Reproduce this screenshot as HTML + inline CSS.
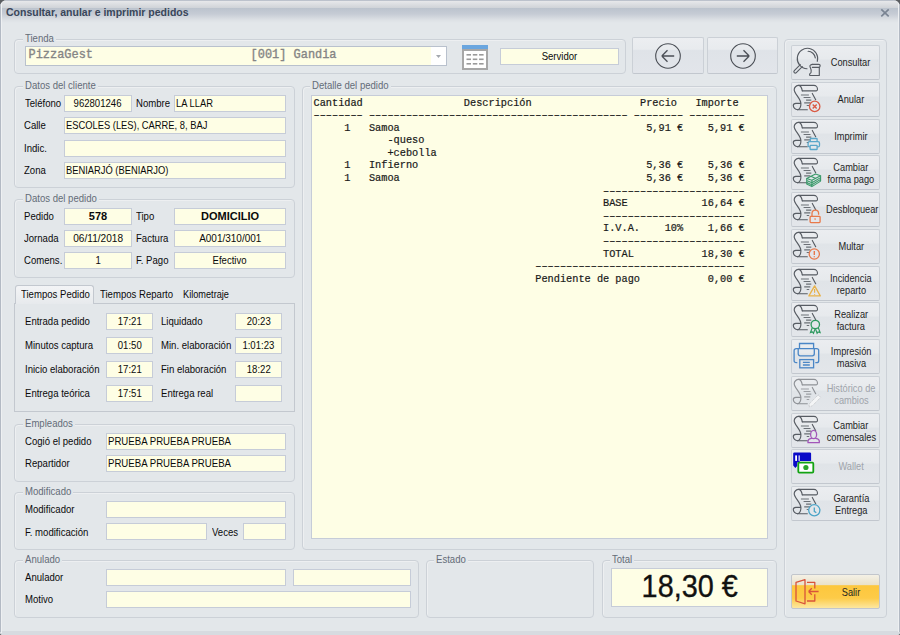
<!DOCTYPE html><html><head><meta charset="utf-8"><style>
html,body{margin:0;padding:0;}
body{width:900px;height:635px;position:relative;overflow:hidden;background:#5a5d61;font-family:"Liberation Sans",sans-serif;}
#win{position:absolute;left:0;top:0;width:900px;height:635px;background:#e3e7ea;border-radius:7px 7px 3px 3px;overflow:hidden}
#lb{position:absolute;left:0;top:4px;width:1px;height:628px;background:#b3bac4}#lb2{position:absolute;left:1px;top:3px;width:1px;height:630px;background:#eef0f2}#rb{position:absolute;left:899px;top:4px;width:1px;height:628px;background:#b3bac4}#rb2{position:absolute;left:898px;top:3px;width:1px;height:629px;background:#eef0f2}
#tb{position:absolute;left:0;top:0;width:900px;height:23px;background:linear-gradient(#bcc2cc 0,#bcc2cc 1px,#e7e8ea 1px,#cfd3d8 8px,#bbc3cd 8px,#c6ccd5 14px,#dde1e5 20px,#e3e7ea 23px)}
#bot{position:absolute;left:0;top:631px;width:900px;height:4px;background:#d7dbe0}
.gb{position:absolute;border:1px solid #ccd1d7;border-radius:4px;box-shadow:inset 1px 1px 0 rgba(255,255,255,.35)}
.gl{position:absolute;height:13px;line-height:13px;font-size:11px;color:#646c78;background:#e3e7ea;padding:0 0 0 2px;white-space:nowrap;overflow:hidden}
.gl span{display:inline-block;transform:scaleX(0.85);transform-origin:0 0}
.t{position:absolute;height:13px;line-height:13px;font-size:11px;color:#0a0a0a;white-space:nowrap;transform:scaleX(0.85);transform-origin:0 0}
.fc{position:absolute;height:13px;line-height:13px;font-size:11px;color:#0a0a0a;white-space:nowrap;text-align:center}
.fc span{display:inline-block;transform:scaleX(0.85)}
.b{font-weight:bold}
.f{position:absolute;box-sizing:border-box;background:#fefee5;border:1px solid #c6ccd8}
.btn{position:absolute;box-sizing:border-box;border:1px solid #cbd0d6;border-bottom-color:#c2c7ce;border-radius:2px;background:linear-gradient(#ebedf0,#e7eaed 38%,#e0e4e8 44%,#e3e6ea)}
.bt{position:absolute;left:29px;width:60px;text-align:center;font-size:11px;line-height:12px;color:#1f1f1f;white-space:nowrap}
.bt span{display:inline-block;transform:scaleX(.84)}
.memo{position:absolute;font-family:"Liberation Mono",monospace;font-size:10.27px;line-height:12.6px;white-space:pre;color:#1a1a1a;-webkit-text-stroke:0.2px #1a1a1a}
svg{position:absolute;overflow:visible}
</style></head><body><div id="win"><div id="tb"></div><div id="bot"></div><div id="lb"></div><div id="lb2"></div><div id="rb"></div><div id="rb2"></div>

<div style="position:absolute;left:6px;top:6px;font-size:10.5px;line-height:13px;font-weight:bold;color:#39465a;white-space:nowrap">Consultar, anular e imprimir pedidos</div>
<svg style="left:0;top:0" width="900" height="30"><path d="M881.3,9.3L888.7,16.3M888.7,9.3L881.3,16.3" stroke="#7a8493" stroke-width="1.7"/></svg>
<div class="gb" style="left:14px;top:39px;width:610px;height:33px"></div>
<div class="gl" style="left:23px;top:32px;width:30.9px"><span style="transform:scaleX(0.870)">Tienda</span></div>
<div class="f" style="left:25px;top:46px;width:422px;height:20px;border-color:#b9c1cd"></div>
<div style="position:absolute;left:431px;top:47px;width:15px;height:18px;background:#fff"></div>
<svg style="left:436px;top:55px" width="5" height="3"><path d="M0,0H5L2.5,3Z" fill="#a4a8ae"/></svg>
<div style="position:absolute;left:28.5px;top:49px;font-family:'Liberation Mono',monospace;font-size:11.95px;line-height:13px;color:#858585;-webkit-text-stroke:0.35px #858585;white-space:pre">PizzaGest                      [001] Gandia</div>
<svg style="left:462px;top:45px" width="26" height="25"><rect x="0" y="0" width="26" height="5" fill="#6aa6df"/><rect x="1" y="5" width="24" height="19" fill="#fff" stroke="#a7a7a7" stroke-width="2"/><rect x="4.5" y="9.0" width="4.5" height="1.6" fill="#9a9a9a"/><rect x="4.5" y="13.5" width="4.5" height="1.6" fill="#9a9a9a"/><rect x="4.5" y="18.0" width="4.5" height="1.6" fill="#9a9a9a"/><rect x="10.8" y="9.0" width="4.5" height="1.6" fill="#9a9a9a"/><rect x="10.8" y="13.5" width="4.5" height="1.6" fill="#9a9a9a"/><rect x="10.8" y="18.0" width="4.5" height="1.6" fill="#9a9a9a"/><rect x="17.1" y="9.0" width="4.5" height="1.6" fill="#9a9a9a"/><rect x="17.1" y="13.5" width="4.5" height="1.6" fill="#9a9a9a"/><rect x="17.1" y="18.0" width="4.5" height="1.6" fill="#9a9a9a"/></svg>
<div class="f" style="left:500px;top:48px;width:119px;height:17px;"></div>
<div class="fc" style="left:500px;top:49.7px;width:119px"><span style="transform:scaleX(0.870)">Servidor</span></div>
<div class="btn" style="left:632px;top:37px;width:72px;height:37px;background:linear-gradient(#eceef1,#e8ebee 32%,#dfe3e8 36%,#e2e5ea)"></div>
<svg style="left:668.0px;top:56px" width="1" height="1"><circle cx="0" cy="0" r="12.3" fill="none" stroke="#4a4e55" stroke-width="1.1"/><path d="M-6.2,0H6.2M-6.2,0L-0.5,-5.7M-6.2,0L-0.5,5.7" stroke="#4a4e55" stroke-width="1.3" fill="none"/></svg>
<div class="btn" style="left:707px;top:37px;width:71px;height:37px;background:linear-gradient(#eceef1,#e8ebee 32%,#dfe3e8 36%,#e2e5ea)"></div>
<svg style="left:742.5px;top:56px" width="1" height="1"><circle cx="0" cy="0" r="12.3" fill="none" stroke="#4a4e55" stroke-width="1.1"/><path d="M-6.2,0H6.2M6.2,0L0.5,-5.7M6.2,0L0.5,5.7" stroke="#4a4e55" stroke-width="1.3" fill="none"/></svg>
<div class="gb" style="left:14px;top:86px;width:279px;height:100px"></div>
<div class="gl" style="left:23px;top:79px;width:72.7px"><span style="transform:scaleX(0.870)">Datos del cliente</span></div>
<div class="t" style="left:25px;top:96.7px;transform:scaleX(0.870);">Teléfono</div>
<div class="f" style="left:64px;top:95px;width:68px;height:17px;"></div>
<div class="fc" style="left:64px;top:96.7px;width:68px"><span style="transform:scaleX(0.870)">962801246</span></div>
<div class="t" style="left:136px;top:96.7px;transform:scaleX(0.870);">Nombre</div>
<div class="f" style="left:174px;top:95px;width:112px;height:17px;"></div>
<div class="t" style="left:176px;top:96.7px;transform:scaleX(0.850)">LA LLAR</div>
<div class="t" style="left:24px;top:118.7px;transform:scaleX(0.870);">Calle</div>
<div class="f" style="left:64px;top:117px;width:222px;height:17px;"></div>
<div class="t" style="left:66px;top:118.7px;transform:scaleX(0.850)">ESCOLES (LES), CARRE, 8, BAJ</div>
<div class="t" style="left:24px;top:141.7px;transform:scaleX(0.870);">Indic.</div>
<div class="f" style="left:64px;top:140px;width:222px;height:17px;"></div>
<div class="t" style="left:24px;top:163.7px;transform:scaleX(0.870);">Zona</div>
<div class="f" style="left:64px;top:162px;width:222px;height:17px;"></div>
<div class="t" style="left:66px;top:163.7px;transform:scaleX(0.850)">BENIARJÓ (BENIARJO)</div>
<div class="gb" style="left:14px;top:199px;width:279px;height:77px"></div>
<div class="gl" style="left:23px;top:192px;width:73.8px"><span style="transform:scaleX(0.870)">Datos del pedido</span></div>
<div class="t" style="left:24px;top:209.7px;transform:scaleX(0.870);">Pedido</div>
<div class="f" style="left:64px;top:208px;width:68px;height:17px;"></div>
<div class="fc b" style="left:64px;top:209.7px;width:68px"><span style="transform:scaleX(1.000)">578</span></div>
<div class="t" style="left:136px;top:209.7px;transform:scaleX(0.870);">Tipo</div>
<div class="f" style="left:174px;top:208px;width:112px;height:17px;"></div>
<div class="fc b" style="left:174px;top:209.7px;width:112px"><span style="transform:scaleX(1.000)">DOMICILIO</span></div>
<div class="t" style="left:24px;top:231.7px;transform:scaleX(0.870);">Jornada</div>
<div class="f" style="left:64px;top:230px;width:68px;height:17px;"></div>
<div class="fc" style="left:64px;top:231.7px;width:68px"><span style="transform:scaleX(0.918)">06/11/2018</span></div>
<div class="t" style="left:136px;top:231.7px;transform:scaleX(0.870);">Factura</div>
<div class="f" style="left:174px;top:230px;width:112px;height:17px;"></div>
<div class="fc" style="left:174px;top:231.7px;width:112px"><span style="transform:scaleX(0.908)">A001/310/001</span></div>
<div class="t" style="left:24px;top:253.7px;transform:scaleX(0.870);">Comens.</div>
<div class="f" style="left:64px;top:252px;width:68px;height:17px;"></div>
<div class="fc" style="left:64px;top:253.7px;width:68px"><span style="transform:scaleX(0.870)">1</span></div>
<div class="t" style="left:136px;top:253.7px;transform:scaleX(0.870);">F. Pago</div>
<div class="f" style="left:174px;top:252px;width:112px;height:17px;"></div>
<div class="fc" style="left:174px;top:253.7px;width:112px"><span style="transform:scaleX(0.870)">Efectivo</span></div>
<div style="position:absolute;left:14px;top:303px;width:281px;height:109px;box-sizing:border-box;border:1px solid #c3c8cf;border-top:none"></div>
<div style="position:absolute;left:94px;top:303px;width:200px;height:1px;background:#c3c8cf"></div>
<div style="position:absolute;left:15px;top:285px;width:79px;height:19px;box-sizing:border-box;border:1px solid #c3c8cf;border-bottom:none;border-radius:3px 3px 0 0;background:linear-gradient(#f3f4f6,#e7eaed)"></div>
<div class="t" style="left:21px;top:287.7px;transform:scaleX(0.870);">Tiempos Pedido</div>
<div class="t" style="left:100px;top:287.7px;transform:scaleX(0.870);">Tiempos Reparto</div>
<div class="t" style="left:183px;top:287.7px;transform:scaleX(0.835);">Kilometraje</div>
<div class="t" style="left:24.5px;top:314.5px;transform:scaleX(0.870);">Entrada pedido</div>
<div class="f" style="left:106px;top:313px;width:47px;height:17px;"></div>
<div class="fc" style="left:106px;top:314.5px;width:47px"><span style="transform:scaleX(0.870)">17:21</span></div>
<div class="t" style="left:160.5px;top:314.5px;transform:scaleX(0.870);">Liquidado</div>
<div class="f" style="left:235px;top:313px;width:47px;height:17px;"></div>
<div class="fc" style="left:235px;top:314.5px;width:47px"><span style="transform:scaleX(0.870)">20:23</span></div>
<div class="t" style="left:24.5px;top:338.5px;transform:scaleX(0.870);">Minutos captura</div>
<div class="f" style="left:106px;top:337px;width:47px;height:17px;"></div>
<div class="fc" style="left:106px;top:338.5px;width:47px"><span style="transform:scaleX(0.870)">01:50</span></div>
<div class="t" style="left:160.5px;top:338.5px;transform:scaleX(0.870);">Min. elaboración</div>
<div class="f" style="left:235px;top:337px;width:47px;height:17px;"></div>
<div class="fc" style="left:235px;top:338.5px;width:47px"><span style="transform:scaleX(0.870)">1:01:23</span></div>
<div class="t" style="left:24.5px;top:362.5px;transform:scaleX(0.870);">Inicio elaboración</div>
<div class="f" style="left:106px;top:361px;width:47px;height:17px;"></div>
<div class="fc" style="left:106px;top:362.5px;width:47px"><span style="transform:scaleX(0.870)">17:21</span></div>
<div class="t" style="left:160.5px;top:362.5px;transform:scaleX(0.870);">Fin elaboración</div>
<div class="f" style="left:235px;top:361px;width:47px;height:17px;"></div>
<div class="fc" style="left:235px;top:362.5px;width:47px"><span style="transform:scaleX(0.870)">18:22</span></div>
<div class="t" style="left:24.5px;top:386.5px;transform:scaleX(0.870);">Entrega teórica</div>
<div class="f" style="left:106px;top:385px;width:47px;height:17px;"></div>
<div class="fc" style="left:106px;top:386.5px;width:47px"><span style="transform:scaleX(0.870)">17:51</span></div>
<div class="t" style="left:160.5px;top:386.5px;transform:scaleX(0.870);">Entrega real</div>
<div class="f" style="left:235px;top:385px;width:47px;height:17px;"></div>
<div class="gb" style="left:14px;top:424px;width:279px;height:56px"></div>
<div class="gl" style="left:23px;top:417px;width:49.9px"><span style="transform:scaleX(0.870)">Empleados</span></div>
<div class="t" style="left:24.5px;top:434.7px;transform:scaleX(0.870);">Cogió el pedido</div>
<div class="f" style="left:106px;top:433px;width:180px;height:17px;"></div>
<div class="t" style="left:108px;top:434.7px;transform:scaleX(0.875)">PRUEBA PRUEBA PRUEBA</div>
<div class="t" style="left:24.5px;top:456.7px;transform:scaleX(0.870);">Repartidor</div>
<div class="f" style="left:106px;top:455px;width:180px;height:17px;"></div>
<div class="t" style="left:108px;top:456.7px;transform:scaleX(0.875)">PRUEBA PRUEBA PRUEBA</div>
<div class="gb" style="left:14px;top:492px;width:279px;height:56px"></div>
<div class="gl" style="left:23px;top:485px;width:48.3px"><span style="transform:scaleX(0.870)">Modificado</span></div>
<div class="t" style="left:24.5px;top:502.7px;transform:scaleX(0.870);">Modificador</div>
<div class="f" style="left:106px;top:501px;width:180px;height:17px;"></div>
<div class="t" style="left:24.5px;top:525.7px;transform:scaleX(0.870);">F. modificación</div>
<div class="f" style="left:106px;top:523px;width:101px;height:17px;"></div>
<div class="t" style="left:211.5px;top:525.7px;transform:scaleX(0.870);">Veces</div>
<div class="f" style="left:243px;top:523px;width:43px;height:17px;"></div>
<div class="gb" style="left:14px;top:560px;width:403px;height:56px"></div>
<div class="gl" style="left:23px;top:553px;width:37.1px"><span style="transform:scaleX(0.870)">Anulado</span></div>
<div class="t" style="left:24.5px;top:570.7px;transform:scaleX(0.870);">Anulador</div>
<div class="f" style="left:106px;top:569px;width:180px;height:17px;"></div>
<div class="f" style="left:293px;top:569px;width:118px;height:17px;"></div>
<div class="t" style="left:24.5px;top:592.7px;transform:scaleX(0.870);">Motivo</div>
<div class="f" style="left:106px;top:591px;width:305px;height:17px;"></div>
<div class="gb" style="left:426px;top:560px;width:166px;height:56px"></div>
<div class="gl" style="left:434px;top:553px;width:31.8px"><span style="transform:scaleX(0.870)">Estado</span></div>
<div class="gb" style="left:602px;top:560px;width:173px;height:56px"></div>
<div class="gl" style="left:610px;top:553px;width:22.2px"><span style="transform:scaleX(0.870)">Total</span></div>
<div class="f" style="left:611px;top:568px;width:157px;height:39px"></div>
<div style="position:absolute;left:611px;top:570.5px;width:157px;text-align:center;font-size:31px;line-height:32px;color:#111;white-space:nowrap"><span style="display:inline-block;transform:scaleX(.93);-webkit-text-stroke:0.35px #111">18,30 €</span></div>
<div class="gb" style="left:302px;top:86px;width:473px;height:462px"></div>
<div class="gl" style="left:310px;top:79px;width:78.6px"><span style="transform:scaleX(0.870)">Detalle del pedido</span></div>
<div class="f" style="left:311px;top:95px;width:457px;height:444px"></div>
<div class="memo" style="left:313.5px;top:96.5px">Cantidad                <span style="position:relative;left:2.5px">Descripción</span>                  Precio   Importe
–––––––– –––––––––––––––––––––––––––––––––––––––––– –––––––– –––––––––
     1   Samoa                                        5,91 €    5,91 €
            -queso
            +cebolla
     1   Infierno                                     5,36 €    5,36 €
     1   Samoa                                        5,36 €    5,36 €
                                               –––––––––––––––––––––––
                                               BASE            16,64 €
                                               –––––––––––––––––––––––
                                               I.V.A.    10%    1,66 €
                                               –––––––––––––––––––––––
                                               TOTAL           18,30 €
                                    ––––––––––––––––––––––––––––––––––
                                    Pendiente de pago           0,00 €</div>
<div class="gb" style="left:784px;top:39px;width:101px;height:577px"></div>
<div class="btn" style="left:791px;top:45px;width:89px;height:35px">
<svg style="left:-1px;top:-1px" width="32" height="34" viewBox="0 0 32 34"><g transform="translate(0.7,0.1)"><g fill="none" stroke="#575c63" stroke-width="1.15" stroke-linecap="round" stroke-linejoin="round"><path d="M25.6,16.2A10.2,10.2 0 1 0 15.3,23.6"/><path d="M16.4,6.2A7.6,7.6 0 0 1 23.6,12.8"/><path d="M8.6,19.6L2.6,25.6A1.4,1.4 0 0 0 4.6,27.6L10.6,21.6"/><path d="M21,19.2H27A1.5,1.5 0 0 1 27,22.2H20.6"/><path d="M21,19.2C19,19.2 17.8,20.5 18.3,21.6C19.2,23.6 20.2,25.5 19.4,27.2C18.8,28.4 17.6,28.6 17.8,29.6C18,30.2 18.6,30.4 19.2,30.4H27.6V22.2"/></g></g></svg>
<div class="bt" style="top:10.2px;color:#1f1f1f"><span>Consultar</span></div>
</div>
<div class="btn" style="left:791px;top:82px;width:89px;height:35px">
<svg style="left:-1px;top:-1px" width="32" height="34" viewBox="0 0 32 34"><g transform="translate(0.7,0.1)"><g fill="none" stroke="#575c63" stroke-width="1.15" stroke-linecap="round" stroke-linejoin="round"><path d="M7.2,3.3H22.2C24.4,3.3 25.8,5.4 25.8,7.2C25.8,8.1 25.4,8.7 24.6,8.7H10.6"/><path d="M7.2,3.3C8.9,3.6 10.1,6 10.6,8.7"/><path d="M7.2,3.3C4.4,3.3 2.5,5.4 2.5,7.6C2.6,11.5 9,16.5 9.2,21.3C9.3,24.6 8,27.6 5.8,27.6C3.5,27.6 1.6,25.6 1.6,23.4C1.6,22 2.6,21.2 4.2,21.2H8.6"/><path d="M5.8,27.6H15.6"/><path d="M20.6,11.3L24,17.6"/></g><g stroke="#575c63" stroke-width="1.2" opacity=".85"><path d="M9.2,12.9H17.2M11.9,15.4H18.8M14.4,18.1H19.6M12.5,20.7H18.6M15,23.4H17.5"/></g><circle cx="23" cy="24.3" r="5.2" fill="#e3e6ea" stroke="#da5a44" stroke-width="1.3"/><path d="M21,22.3L25,26.3M25,22.3L21,26.3" stroke="#da5a44" stroke-width="1.4"/></g></svg>
<div class="bt" style="top:10.2px;color:#1f1f1f"><span>Anular</span></div>
</div>
<div class="btn" style="left:791px;top:119px;width:89px;height:35px">
<svg style="left:-1px;top:-1px" width="32" height="34" viewBox="0 0 32 34"><g transform="translate(0.7,0.1)"><g fill="none" stroke="#575c63" stroke-width="1.15" stroke-linecap="round" stroke-linejoin="round"><path d="M7.2,3.3H22.2C24.4,3.3 25.8,5.4 25.8,7.2C25.8,8.1 25.4,8.7 24.6,8.7H10.6"/><path d="M7.2,3.3C8.9,3.6 10.1,6 10.6,8.7"/><path d="M7.2,3.3C4.4,3.3 2.5,5.4 2.5,7.6C2.6,11.5 9,16.5 9.2,21.3C9.3,24.6 8,27.6 5.8,27.6C3.5,27.6 1.6,25.6 1.6,23.4C1.6,22 2.6,21.2 4.2,21.2H8.6"/><path d="M5.8,27.6H15.6"/><path d="M20.6,11.3L24,17.6"/></g><g stroke="#575c63" stroke-width="1.2" opacity=".85"><path d="M9.2,12.9H17.2M11.9,15.4H18.8M14.4,18.1H19.6M12.5,20.7H18.6M15,23.4H17.5"/></g><g fill="#e3e6ea" stroke="#5aa6c9" stroke-width="1.3"><rect x="18.6" y="19.4" width="6.8" height="3.6" rx=".6"/><rect x="16.4" y="22.6" width="11.4" height="5.2" rx="1.5"/><rect x="18.4" y="26.2" width="7" height="4.2" rx=".6"/></g></g></svg>
<div class="bt" style="top:10.2px;color:#1f1f1f"><span>Imprimir</span></div>
</div>
<div class="btn" style="left:791px;top:155px;width:89px;height:35px">
<svg style="left:-1px;top:-1px" width="32" height="34" viewBox="0 0 32 34"><g transform="translate(0.7,0.1)"><g fill="none" stroke="#575c63" stroke-width="1.15" stroke-linecap="round" stroke-linejoin="round"><path d="M7.2,3.3H22.2C24.4,3.3 25.8,5.4 25.8,7.2C25.8,8.1 25.4,8.7 24.6,8.7H10.6"/><path d="M7.2,3.3C8.9,3.6 10.1,6 10.6,8.7"/><path d="M7.2,3.3C4.4,3.3 2.5,5.4 2.5,7.6C2.6,11.5 9,16.5 9.2,21.3C9.3,24.6 8,27.6 5.8,27.6C3.5,27.6 1.6,25.6 1.6,23.4C1.6,22 2.6,21.2 4.2,21.2H8.6"/><path d="M5.8,27.6H15.6"/><path d="M20.6,11.3L24,17.6"/></g><g stroke="#575c63" stroke-width="1.2" opacity=".85"><path d="M9.2,12.9H17.2M11.9,15.4H18.8M14.4,18.1H19.6M12.5,20.7H18.6M15,23.4H17.5"/></g><g fill="none" stroke="#3b9a6b" stroke-width="1.1" stroke-linejoin="round"><path d="M15,23.3L23.8,18.8L28.9,20.6L20.2,25.1Z" fill="#e3e6ea"/><path d="M15,23.3V29L20.2,31.5L28.9,26V20.6M20.2,25.1V31.5M15,25.4L20.2,27.6L28.9,22.5M15,27.3L20.2,29.6L28.9,24.3M19,21.2L24.2,23.4"/></g></g></svg>
<div class="bt" style="top:5px;color:#1f1f1f"><span>Cambiar</span><br><span>forma pago</span></div>
</div>
<div class="btn" style="left:791px;top:192px;width:89px;height:35px">
<svg style="left:-1px;top:-1px" width="32" height="34" viewBox="0 0 32 34"><g transform="translate(0.7,0.1)"><g fill="none" stroke="#575c63" stroke-width="1.15" stroke-linecap="round" stroke-linejoin="round"><path d="M7.2,3.3H22.2C24.4,3.3 25.8,5.4 25.8,7.2C25.8,8.1 25.4,8.7 24.6,8.7H10.6"/><path d="M7.2,3.3C8.9,3.6 10.1,6 10.6,8.7"/><path d="M7.2,3.3C4.4,3.3 2.5,5.4 2.5,7.6C2.6,11.5 9,16.5 9.2,21.3C9.3,24.6 8,27.6 5.8,27.6C3.5,27.6 1.6,25.6 1.6,23.4C1.6,22 2.6,21.2 4.2,21.2H8.6"/><path d="M5.8,27.6H15.6"/><path d="M20.6,11.3L24,17.6"/></g><g stroke="#575c63" stroke-width="1.2" opacity=".85"><path d="M9.2,12.9H17.2M11.9,15.4H18.8M14.4,18.1H19.6M12.5,20.7H18.6M15,23.4H17.5"/></g><rect x="18.4" y="24.3" width="10" height="6.2" rx=".8" fill="#e3e6ea" stroke="#e8794a" stroke-width="1.3"/><path d="M20.3,24.3V21.3A3.3,3.3 0 0 1 26.9,21.3V22.6" fill="none" stroke="#e8794a" stroke-width="1.3"/><path d="M22.3,26.5H24.5L23.4,28.2Z" fill="#e8794a"/></g></svg>
<div class="bt" style="top:10.2px;color:#1f1f1f"><span>Desbloquear</span></div>
</div>
<div class="btn" style="left:791px;top:229px;width:89px;height:35px">
<svg style="left:-1px;top:-1px" width="32" height="34" viewBox="0 0 32 34"><g transform="translate(0.7,0.1)"><g fill="none" stroke="#575c63" stroke-width="1.15" stroke-linecap="round" stroke-linejoin="round"><path d="M7.2,3.3H22.2C24.4,3.3 25.8,5.4 25.8,7.2C25.8,8.1 25.4,8.7 24.6,8.7H10.6"/><path d="M7.2,3.3C8.9,3.6 10.1,6 10.6,8.7"/><path d="M7.2,3.3C4.4,3.3 2.5,5.4 2.5,7.6C2.6,11.5 9,16.5 9.2,21.3C9.3,24.6 8,27.6 5.8,27.6C3.5,27.6 1.6,25.6 1.6,23.4C1.6,22 2.6,21.2 4.2,21.2H8.6"/><path d="M5.8,27.6H15.6"/><path d="M20.6,11.3L24,17.6"/></g><g stroke="#575c63" stroke-width="1.2" opacity=".85"><path d="M9.2,12.9H17.2M11.9,15.4H18.8M14.4,18.1H19.6M12.5,20.7H18.6M15,23.4H17.5"/></g><circle cx="22.6" cy="24.9" r="5.1" fill="#e3e6ea" stroke="#e8794a" stroke-width="1.3"/><path d="M22.6,21.8V25.8M22.6,27.2V28.2" stroke="#e8794a" stroke-width="1.4"/></g></svg>
<div class="bt" style="top:10.2px;color:#1f1f1f"><span>Multar</span></div>
</div>
<div class="btn" style="left:791px;top:266px;width:89px;height:35px">
<svg style="left:-1px;top:-1px" width="32" height="34" viewBox="0 0 32 34"><g transform="translate(0.7,0.1)"><g fill="none" stroke="#575c63" stroke-width="1.15" stroke-linecap="round" stroke-linejoin="round"><path d="M7.2,3.3H22.2C24.4,3.3 25.8,5.4 25.8,7.2C25.8,8.1 25.4,8.7 24.6,8.7H10.6"/><path d="M7.2,3.3C8.9,3.6 10.1,6 10.6,8.7"/><path d="M7.2,3.3C4.4,3.3 2.5,5.4 2.5,7.6C2.6,11.5 9,16.5 9.2,21.3C9.3,24.6 8,27.6 5.8,27.6C3.5,27.6 1.6,25.6 1.6,23.4C1.6,22 2.6,21.2 4.2,21.2H8.6"/><path d="M5.8,27.6H15.6"/><path d="M20.6,11.3L24,17.6"/></g><g stroke="#575c63" stroke-width="1.2" opacity=".85"><path d="M9.2,12.9H17.2M11.9,15.4H18.8M14.4,18.1H19.6M12.5,20.7H18.6M15,23.4H17.5"/></g><path d="M22.9,19.8L28.6,29.8H17.2Z" fill="#e3e6ea" stroke="#e8b24a" stroke-width="1.3" stroke-linejoin="round"/><path d="M22.9,23V26.6M22.9,27.8V28.6" stroke="#e8b24a" stroke-width="1.2"/></g></svg>
<div class="bt" style="top:5px;color:#1f1f1f"><span>Incidencia</span><br><span>reparto</span></div>
</div>
<div class="btn" style="left:791px;top:302px;width:89px;height:35px">
<svg style="left:-1px;top:-1px" width="32" height="34" viewBox="0 0 32 34"><g transform="translate(0.7,0.1)"><g fill="none" stroke="#575c63" stroke-width="1.15" stroke-linecap="round" stroke-linejoin="round"><path d="M7.2,3.3H22.2C24.4,3.3 25.8,5.4 25.8,7.2C25.8,8.1 25.4,8.7 24.6,8.7H10.6"/><path d="M7.2,3.3C8.9,3.6 10.1,6 10.6,8.7"/><path d="M7.2,3.3C4.4,3.3 2.5,5.4 2.5,7.6C2.6,11.5 9,16.5 9.2,21.3C9.3,24.6 8,27.6 5.8,27.6C3.5,27.6 1.6,25.6 1.6,23.4C1.6,22 2.6,21.2 4.2,21.2H8.6"/><path d="M5.8,27.6H15.6"/><path d="M20.6,11.3L24,17.6"/></g><g stroke="#575c63" stroke-width="1.2" opacity=".85"><path d="M9.2,12.9H17.2M11.9,15.4H18.8M14.4,18.1H19.6M12.5,20.7H18.6M15,23.4H17.5"/></g><path d="M20.6,25.5L18.8,30.5L20.8,29.8L21.8,31.2L23.3,27M26.6,25.5L28.4,30.5L26.4,29.8L25.4,31.2L23.9,27" fill="#e3e6ea" stroke="#2f9a60" stroke-width="1.2"/><circle cx="23.6" cy="22.4" r="4.2" fill="#e3e6ea" stroke="#2f9a60" stroke-width="1.3"/></g></svg>
<div class="bt" style="top:5px;color:#1f1f1f"><span>Realizar</span><br><span>factura</span></div>
</div>
<div class="btn" style="left:791px;top:339px;width:89px;height:35px">
<svg style="left:-1px;top:-1px" width="32" height="34" viewBox="0 0 32 34"><g transform="translate(0.7,0.1)"><g fill="none" stroke="#4a86c6" stroke-width="1.3"><path d="M7.8,9.5V4.4H21.9V9.5"/><path d="M5.6,23.6H4.4A2,2 0 0 1 2.4,21.6V11.5A2,2 0 0 1 4.4,9.5H25A2,2 0 0 1 27,11.5V21.6A2,2 0 0 1 25,23.6H23.6"/><path d="M6.5,9.5V14.7A2,2 0 0 0 8.5,16.7H20.6A2,2 0 0 0 22.6,14.7V9.5"/><rect x="8.1" y="20.5" width="13.8" height="8.2"/><path d="M11.2,23.3H18.1M11.2,25.9H18.1"/></g></g></svg>
<div class="bt" style="top:5px;color:#1f1f1f"><span>Impresión</span><br><span>masiva</span></div>
</div>
<div class="btn" style="left:791px;top:376px;width:89px;height:35px">
<svg style="left:-1px;top:-1px" width="32" height="34" viewBox="0 0 32 34"><g transform="translate(0.7,0.1)"><g fill="none" stroke="#8f9297" stroke-width="1.15" stroke-linecap="round" stroke-linejoin="round"><path d="M7.2,3.3H22.2C24.4,3.3 25.8,5.4 25.8,7.2C25.8,8.1 25.4,8.7 24.6,8.7H10.6"/><path d="M7.2,3.3C8.9,3.6 10.1,6 10.6,8.7"/><path d="M7.2,3.3C4.4,3.3 2.5,5.4 2.5,7.6C2.6,11.5 9,16.5 9.2,21.3C9.3,24.6 8,27.6 5.8,27.6C3.5,27.6 1.6,25.6 1.6,23.4C1.6,22 2.6,21.2 4.2,21.2H8.6"/><path d="M5.8,27.6H15.6"/><path d="M20.6,11.3L24,17.6"/></g><g stroke="#8f9297" stroke-width="1.2" opacity=".85"><path d="M9.2,12.9H17.2M11.9,15.4H18.8M14.4,18.1H19.6M12.5,20.7H18.6M15,23.4H17.5"/></g><path d="M26.5,18.8L29,21.3L20.5,29.8L17,30.8L18,27.3Z" fill="#f4f5f6" stroke="#c4c6c9" stroke-width="1" stroke-dasharray="1,1"/></g></svg>
<div class="bt" style="top:5px;color:#9fa4ab"><span>Histórico de</span><br><span>cambios</span></div>
</div>
<div class="btn" style="left:791px;top:413px;width:89px;height:35px">
<svg style="left:-1px;top:-1px" width="32" height="34" viewBox="0 0 32 34"><g transform="translate(0.7,0.1)"><g fill="none" stroke="#575c63" stroke-width="1.15" stroke-linecap="round" stroke-linejoin="round"><path d="M7.2,3.3H22.2C24.4,3.3 25.8,5.4 25.8,7.2C25.8,8.1 25.4,8.7 24.6,8.7H10.6"/><path d="M7.2,3.3C8.9,3.6 10.1,6 10.6,8.7"/><path d="M7.2,3.3C4.4,3.3 2.5,5.4 2.5,7.6C2.6,11.5 9,16.5 9.2,21.3C9.3,24.6 8,27.6 5.8,27.6C3.5,27.6 1.6,25.6 1.6,23.4C1.6,22 2.6,21.2 4.2,21.2H8.6"/><path d="M5.8,27.6H15.6"/><path d="M20.6,11.3L24,17.6"/></g><g stroke="#575c63" stroke-width="1.2" opacity=".85"><path d="M9.2,12.9H17.2M11.9,15.4H18.8M14.4,18.1H19.6M12.5,20.7H18.6M15,23.4H17.5"/></g><path d="M16.3,29.6V27.8C16.3,26.3 18,25.6 19.6,25.2H24.2C25.8,25.6 27.6,26.3 27.6,27.8V29.6Z" fill="#e3e6ea" stroke="#a256b9" stroke-width="1.3" stroke-linejoin="round"/><ellipse cx="21.9" cy="21.4" rx="3" ry="4.2" fill="#e3e6ea" stroke="#a256b9" stroke-width="1.3"/></g></svg>
<div class="bt" style="top:5px;color:#1f1f1f"><span>Cambiar</span><br><span>comensales</span></div>
</div>
<div class="btn" style="left:791px;top:449px;width:89px;height:35px">
<svg style="left:-1px;top:-1px" width="32" height="34" viewBox="0 0 32 34"><g transform="translate(0.7,0.1)"><path d="M1.5,4.5Q1.5,3.3 2.7,3.3H18.2Q19.4,3.3 19.4,4.5V11.8H8V13.5H5.5V17L3.6,18.8L1.5,16.5Z" fill="#0a0ac8"/><rect x="3.5" y="6.3" width="1.8" height="5.5" fill="#fff"/><rect x="6.8" y="6.3" width="1.4" height="5.5" fill="#c9c9f0"/><rect x="6.6" y="13.5" width="15" height="10" rx="1" fill="#fff" stroke="#13a313" stroke-width="1.8"/><circle cx="14.2" cy="18.4" r="2.6" fill="#2aa52a"/></g></svg>
<div class="bt" style="top:10.2px;color:#9fa4ab"><span>Wallet</span></div>
</div>
<div class="btn" style="left:791px;top:486px;width:89px;height:35px">
<svg style="left:-1px;top:-1px" width="32" height="34" viewBox="0 0 32 34"><g transform="translate(0.7,0.1)"><g fill="none" stroke="#575c63" stroke-width="1.15" stroke-linecap="round" stroke-linejoin="round"><path d="M7.2,3.3H22.2C24.4,3.3 25.8,5.4 25.8,7.2C25.8,8.1 25.4,8.7 24.6,8.7H10.6"/><path d="M7.2,3.3C8.9,3.6 10.1,6 10.6,8.7"/><path d="M7.2,3.3C4.4,3.3 2.5,5.4 2.5,7.6C2.6,11.5 9,16.5 9.2,21.3C9.3,24.6 8,27.6 5.8,27.6C3.5,27.6 1.6,25.6 1.6,23.4C1.6,22 2.6,21.2 4.2,21.2H8.6"/><path d="M5.8,27.6H15.6"/><path d="M20.6,11.3L24,17.6"/></g><g stroke="#575c63" stroke-width="1.2" opacity=".85"><path d="M9.2,12.9H17.2M11.9,15.4H18.8M14.4,18.1H19.6M12.5,20.7H18.6M15,23.4H17.5"/></g><circle cx="22.6" cy="24.2" r="5.6" fill="#e3e6ea" stroke="#4ba4c7" stroke-width="1.3"/><path d="M22.6,21.4V25.2L24.6,26.6" fill="none" stroke="#4ba4c7" stroke-width="1.3"/></g></svg>
<div class="bt" style="top:5px;color:#1f1f1f"><span>Garantía</span><br><span>Entrega</span></div>
</div>
<div class="btn" style="left:791px;top:574px;width:89px;height:35px;border-color:#c2c6cc;background:linear-gradient(#f4f1e6,#e9e1c9 31%,#fdc73c 32%,#fdcb48 70%,#fde7a0)"></div>
<div class="bt" style="left:821px;top:586px;color:#1f1f1f"><span>Salir</span></div>
<svg style="left:0;top:0" width="900" height="635"><g fill="none" stroke="#d9533b" stroke-width="1.3" stroke-linejoin="round"><path d="M796,582.4L805,579.6V603.8L796,601Z"/><path d="M807,582.3H814.8V588.5M814.8,594.3V601H807"/><path d="M808.6,591.5H818.6M808.6,591.5L811.8,588.3M808.6,591.5L811.8,594.7"/></g></svg>
</div></body></html>
